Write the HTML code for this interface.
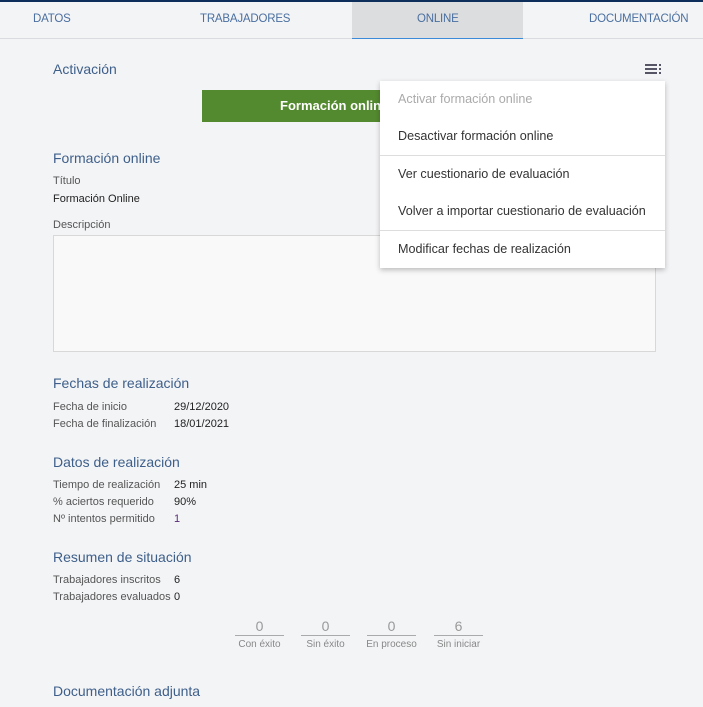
<!DOCTYPE html><html><head><style>
body{margin:0;width:703px;height:707px;overflow:hidden;background:#f3f4f6;font-family:"Liberation Sans",sans-serif;position:relative}
.a{position:absolute;white-space:nowrap}
.h{color:#3e5f8a;font-size:14px}
.l{color:#555;font-size:11px}
.v{color:#222;font-size:11px}
.t{color:#4a6fa0;font-size:11.5px;letter-spacing:-0.2px}
.m div{height:37px;line-height:37px;padding-left:18px;font-size:12.6px;color:#333}
</style></head><body>
<div class="a" style="left:0;top:0;width:703px;height:2px;background:#0d2d5a"></div>
<div class="a" style="left:0;top:38px;width:703px;height:1px;background:#d8dbe0"></div>
<div class="a" style="left:352px;top:2px;width:171px;height:36px;background:#dcdddf;border-bottom:1px solid #3a8ad8"></div>
<div class="a t" style="left:33px;top:13px">DATOS</div>
<div class="a t" style="left:200px;top:13px">TRABAJADORES</div>
<div class="a t" style="left:417px;top:13px">ONLINE</div>
<div class="a t" style="left:589px;top:13px">DOCUMENTACIÓN</div>
<div class="a h" style="left:53px;top:61px">Activación</div>
<div class="a" style="left:645px;top:64px;width:12px;height:2px;background:#556;box-shadow:0 4px 0 #556,0 8px 0 #556"></div>
<div class="a" style="left:659px;top:64px;width:2px;height:10px;background:repeating-linear-gradient(#556 0 2px,transparent 2px 4px)"></div>
<div class="a" style="left:202px;top:90px;width:200px;height:32px;background:#548a2f;color:#fff;font-size:13px;font-weight:bold;line-height:32px;padding-left:78px;overflow:hidden;box-sizing:border-box">Formación online</div>
<div class="a h" style="left:53px;top:150px">Formación online</div>
<div class="a l" style="left:53px;top:175px">Título</div>
<div class="a v" style="left:53px;top:193px">Formación Online</div>
<div class="a l" style="left:53px;top:219px">Descripción</div>
<div class="a" style="left:53px;top:235px;width:601px;height:115px;background:#f9f9f9;border:1px solid #d8d8d8"></div>
<div class="a h" style="left:53px;top:375px">Fechas de realización</div>
<div class="a l" style="left:53px;top:401px">Fecha de inicio</div><div class="a v" style="left:174px;top:401px">29/12/2020</div>
<div class="a l" style="left:53px;top:418px">Fecha de finalización</div><div class="a v" style="left:174px;top:418px">18/01/2021</div>
<div class="a h" style="left:53px;top:454px">Datos de realización</div>
<div class="a l" style="left:53px;top:479px">Tiempo de realización</div><div class="a v" style="left:174px;top:479px">25 min</div>
<div class="a l" style="left:53px;top:496px">% aciertos requerido</div><div class="a v" style="left:174px;top:496px">90%</div>
<div class="a l" style="left:53px;top:513px">Nº intentos permitido</div><div class="a v" style="left:174px;top:513px;color:#5a2a7a">1</div>
<div class="a h" style="left:53px;top:549px">Resumen de situación</div>
<div class="a l" style="left:53px;top:574px">Trabajadores inscritos</div><div class="a v" style="left:174px;top:574px">6</div>
<div class="a l" style="left:53px;top:591px">Trabajadores evaluados</div><div class="a v" style="left:174px;top:591px">0</div>
<div class="a" style="left:235px;top:618px;width:49px;text-align:center;color:#999;font-size:14px;border-bottom:1px solid #aaa;padding-bottom:1px">0</div>
<div class="a" style="left:301px;top:618px;width:49px;text-align:center;color:#999;font-size:14px;border-bottom:1px solid #aaa;padding-bottom:1px">0</div>
<div class="a" style="left:367px;top:618px;width:49px;text-align:center;color:#999;font-size:14px;border-bottom:1px solid #aaa;padding-bottom:1px">0</div>
<div class="a" style="left:434px;top:618px;width:49px;text-align:center;color:#999;font-size:14px;border-bottom:1px solid #aaa;padding-bottom:1px">6</div>
<div class="a" style="left:229px;top:639px;width:61px;text-align:center;color:#888;font-size:10px">Con éxito</div>
<div class="a" style="left:295px;top:639px;width:61px;text-align:center;color:#888;font-size:10px">Sin éxito</div>
<div class="a" style="left:361px;top:639px;width:61px;text-align:center;color:#888;font-size:10px">En proceso</div>
<div class="a" style="left:428px;top:639px;width:61px;text-align:center;color:#888;font-size:10px">Sin iniciar</div>
<div class="a h" style="left:53px;top:683px">Documentación adjunta</div>
<div class="a m" style="left:380px;top:81px;width:285px;background:#fff;box-shadow:0 2px 5px rgba(0,0,0,.25)">
<div style="color:#aaa">Activar formación online</div>
<div style="border-bottom:1px solid #ddd">Desactivar formación online</div>
<div>Ver cuestionario de evaluación</div>
<div style="border-bottom:1px solid #ddd">Volver a importar cuestionario de evaluación</div>
<div>Modificar fechas de realización</div>
</div>
</body></html>
